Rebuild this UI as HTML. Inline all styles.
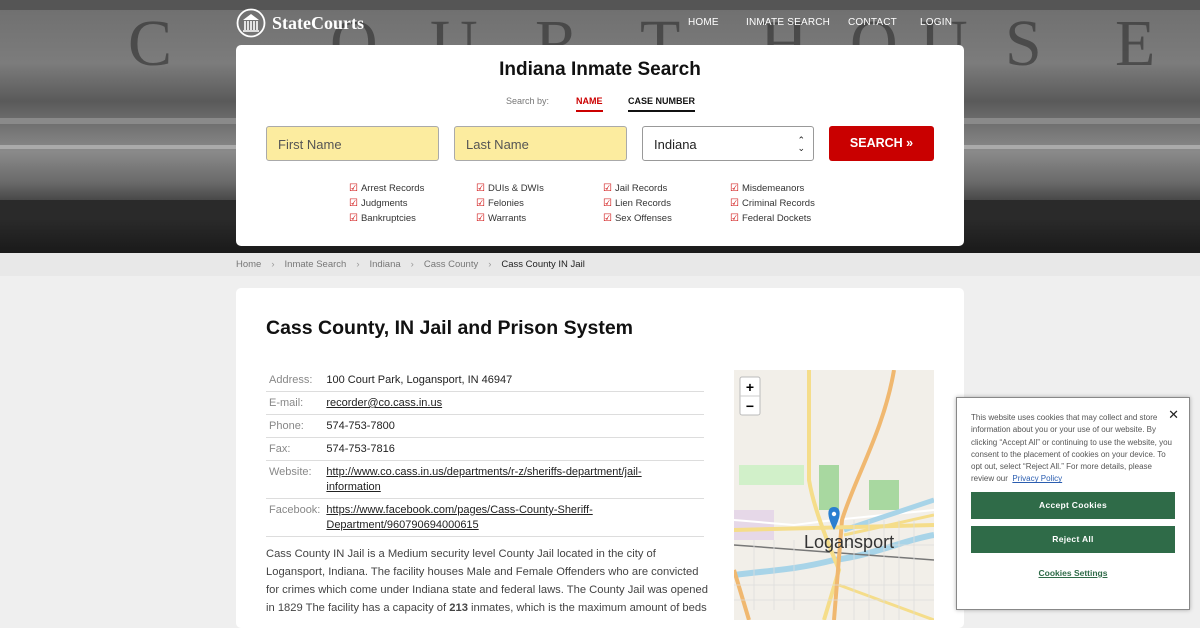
<!DOCTYPE html>
<html><head><meta charset="utf-8"><style>
*{box-sizing:border-box;margin:0;padding:0}
body{width:1200px;height:620px;overflow:hidden;background:#efefef;font-family:"Liberation Sans","DejaVu Sans",sans-serif;position:relative}
.hero{position:absolute;left:0;top:0;width:1200px;height:253px;background:linear-gradient(180deg,#6e6e6e 0,#7c7c7c 25%,#5a5a5a 40%,#8a8a8a 60%,#6a6a6a 72%,#2c2c2c 85%,#1a1a1a 100%);overflow:hidden}
.hero .L{position:absolute;top:6px;font-family:"Liberation Serif",serif;font-size:66px;color:#2e2e2e;opacity:.6}
.hero .band{position:absolute;left:0;width:1200px;height:6px;background:#3a3a3a}
.logo{position:absolute;left:236px;top:8px;color:#fff;font-family:"Liberation Serif",serif;font-size:18px;font-weight:bold;display:flex;align-items:center;gap:6px}
.nav{position:absolute;top:17px;font-size:10px;color:#fff;letter-spacing:.2px}
.box{position:absolute;left:236px;top:45px;width:728px;height:201px;background:#fff;border-radius:5px}
.box h1{position:absolute;top:14px;width:100%;text-align:center;font-size:19px;font-weight:bold;color:#111}
.sb{position:absolute;top:51px;font-size:9px;color:#777}
.tab{position:absolute;top:51px;font-size:9px;font-weight:bold;padding-bottom:4px}
.inp{position:absolute;top:81px;height:35px;border:1px solid #aaa;border-radius:3px;background:#fcec9f;font-size:13px;color:#555;padding:10px 11px}
.btn{position:absolute;left:593px;top:81px;width:105px;height:35px;background:#c90000;border-radius:3px;color:#fff;font-weight:bold;font-size:12.5px;text-align:center;line-height:35px}
.chk{position:absolute;top:136px;font-size:9.5px;color:#333;line-height:15px}
.chk span{color:#c00;font-size:10px;margin-right:3px}
.crumb{position:absolute;left:0;top:253px;width:1200px;height:23px;background:#e8e8e8;font-size:9.5px;color:#777;padding:6px 0 0 236px}
.crumb b{font-weight:normal;color:#999;margin:0 10px}
.card{position:absolute;left:236px;top:288px;width:728px;height:340px;background:#fff;border-radius:5px}
.card h2{position:absolute;left:30px;top:29px;font-size:19.5px;color:#111}
table{position:absolute;left:30px;top:81px;width:438px;border-collapse:collapse;font-size:11px;color:#222}
td{border-bottom:1px solid #ddd;padding:4px 3px 3px;vertical-align:top;line-height:15px}
td:first-child{color:#888;width:56px}
p.d{position:absolute;left:30px;top:257px;width:442px;font-size:11.2px;line-height:18px;color:#444}
.map{position:absolute;left:734px;top:370px;width:200px;height:250px;background:#f2efe9;overflow:hidden}
.cookie{position:absolute;left:956px;top:397px;width:234px;height:213px;background:#fff;border:1px solid #888;box-shadow:0 0 4px rgba(0,0,0,.3)}
.cookie p{position:absolute;left:14px;top:14px;width:204px;font-size:8px;line-height:12.3px;color:#555}
.cb{position:absolute;left:14px;width:204px;height:27px;background:#2f6b48;color:#fff;font-size:8.5px;font-weight:bold;text-align:center;line-height:27px;letter-spacing:.3px}
</style></head><body>
<div class="hero">
<div class="band" style="top:0;height:10px;background:#555"></div>
<div class="band" style="top:118px;background:#8a8a8a"></div>
<div class="band" style="top:145px;background:#aaa;height:4px"></div>
<div class="band" style="top:200px;background:#2a2a2a;height:20px"></div>
<div class="L" style="left:128px">C</div>
<div class="L" style="left:330px">O</div>
<div class="L" style="left:430px">U</div>
<div class="L" style="left:535px">R</div>
<div class="L" style="left:640px">T</div>
<div class="L" style="left:760px">H</div>
<div class="L" style="left:850px">O</div>
<div class="L" style="left:920px">U</div>
<div class="L" style="left:1005px">S</div>
<div class="L" style="left:1115px">E</div>
</div>
<div class="logo"><svg width="30" height="30" viewBox="0 0 30 30"><circle cx="15" cy="15" r="13.5" fill="none" stroke="#fff" stroke-width="1.8"/><path d="M7 12 L15 6 L23 12Z" fill="#fff"/><path d="M9 13v9M12 13v9M15 13v9M18 13v9M21 13v9" stroke="#fff" stroke-width="1.6"/><path d="M7 23h16" stroke="#fff" stroke-width="1.5"/></svg>StateCourts</div>
<div class="nav" style="left:688px">HOME</div>
<div class="nav" style="left:746px">INMATE SEARCH</div>
<div class="nav" style="left:848px">CONTACT</div>
<div class="nav" style="left:920px">LOGIN</div>
<div class="box">
<h1>Indiana Inmate Search</h1>
<div class="sb" style="left:270px">Search by:</div>
<div class="tab" style="left:340px;color:#c00;border-bottom:2px solid #c00">NAME</div>
<div class="tab" style="left:392px;color:#111;border-bottom:2px solid #111">CASE NUMBER</div>
<div class="inp" style="left:30px;width:173px">First Name</div>
<div class="inp" style="left:218px;width:173px">Last Name</div>
<div class="inp" style="left:406px;width:172px;background:#fff;color:#222;border-color:#999">Indiana<span style="position:absolute;right:8px;top:9px;font-size:9px;line-height:8px">⌃<br>⌄</span></div>
<div class="btn">SEARCH »</div>
<div class="chk" style="left:113px"><span>☑</span>Arrest Records<br><span>☑</span>Judgments<br><span>☑</span>Bankruptcies</div>
<div class="chk" style="left:240px"><span>☑</span>DUIs &amp; DWIs<br><span>☑</span>Felonies<br><span>☑</span>Warrants</div>
<div class="chk" style="left:367px"><span>☑</span>Jail Records<br><span>☑</span>Lien Records<br><span>☑</span>Sex Offenses</div>
<div class="chk" style="left:494px"><span>☑</span>Misdemeanors<br><span>☑</span>Criminal Records<br><span>☑</span>Federal Dockets</div>
</div>
<div class="crumb">Home<b>›</b>Inmate Search<b>›</b>Indiana<b>›</b>Cass County<b>›</b><span style="color:#222">Cass County IN Jail</span></div>
<div class="card">
<h2>Cass County, IN Jail and Prison System</h2>
<table>
<tr><td>Address:</td><td>100 Court Park, Logansport, IN 46947</td></tr>
<tr><td>E-mail:</td><td><u>recorder@co.cass.in.us</u></td></tr>
<tr><td>Phone:</td><td>574-753-7800</td></tr>
<tr><td>Fax:</td><td>574-753-7816</td></tr>
<tr><td>Website:</td><td><u>http://www.co.cass.in.us/departments/r-z/sheriffs-department/jail-<br>information</u></td></tr>
<tr><td>Facebook:</td><td><u>https://www.facebook.com/pages/Cass-County-Sheriff-<br>Department/960790694000615</u></td></tr>
</table>
<p class="d">Cass County IN Jail is a Medium security level County Jail located in the city of Logansport, Indiana. The facility houses Male and Female Offenders who are convicted for crimes which come under Indiana state and federal laws. The County Jail was opened in 1829 The facility has a capacity of <b>213</b> inmates, which is the maximum amount of beds</p>
</div>
<div class="map"><svg width="200" height="250" viewBox="0 0 200 250">
<path d="M5 95 L70 95 L70 115 L5 115Z" fill="#c8f0c0" opacity=".8"/>
<path d="M85 95h20v45H85Z" fill="#a8d8a0"/>
<path d="M135 110h30v30h-30Z" fill="#a8d8a0"/>
<path d="M0 140h40v30H0Z" fill="#e6d8e8"/>
<path d="M0 150 L60 155 L100 150 L200 140" stroke="#fff" stroke-width="2" fill="none"/>
<path d="M0 205 C40 200 60 200 100 190 C140 185 170 170 200 165" stroke="#a8d4e8" stroke-width="6" fill="none"/>
<path d="M110 160 C140 150 170 140 200 130" stroke="#a8d4e8" stroke-width="5" fill="none"/>
<path d="M0 175 L200 190" stroke="#777" stroke-width="1.5" fill="none"/>
<path d="M75 0 L75 110 C80 140 95 175 105 200 L90 250" stroke="#f5dd8a" stroke-width="4" fill="none"/>
<path d="M160 0 C150 60 120 110 108 150 L100 250" stroke="#f0b870" stroke-width="4" fill="none"/>
<path d="M0 160 L200 155" stroke="#f5dd8a" stroke-width="4" fill="none"/>
<path d="M110 165 L200 145" stroke="#f5dd8a" stroke-width="3" fill="none"/>
<path d="M0 200 L15 250" stroke="#f0b870" stroke-width="4" fill="none"/>
<path d="M105 215 L200 250" stroke="#f5dd8a" stroke-width="3" fill="none"/>
<g stroke="#ddd" stroke-width=".8"><path d="M120 150v100M135 150v100M150 150v100M165 150v100M180 150v100M20 170v70M40 170v70M60 170v70"/><path d="M0 215h200M0 230h200M110 175h90"/></g>
<text x="70" y="178" font-size="18" fill="#333" font-family="Liberation Sans,sans-serif">Logansport</text>
<path d="M100 137 C93 137 92 145 100 160 C108 145 107 137 100 137Z" fill="#2a7fd0"/><circle cx="100" cy="144" r="2.2" fill="#fff"/>
<rect x="6" y="7" width="20" height="38" rx="2" fill="#fff" stroke="#bbb"/><path d="M6 26h20" stroke="#ccc"/>
<text x="16" y="22" font-size="14" font-weight="bold" text-anchor="middle" fill="#000">+</text><text x="16" y="41" font-size="14" font-weight="bold" text-anchor="middle" fill="#000">−</text>
</svg></div>
<div class="cookie">
<p>This website uses cookies that may collect and store information about you or your use of our website. By clicking “Accept All” or continuing to use the website, you consent to the placement of cookies on your device. To opt out, select “Reject All.” For more details, please review our &nbsp;<u style="color:#2a5db0">Privacy Policy</u></p>
<div style="position:absolute;right:10px;top:9px;font-size:13px;font-weight:bold;color:#222">✕</div>
<div class="cb" style="top:94px">Accept Cookies</div>
<div class="cb" style="top:128px">Reject All</div>
<div style="position:absolute;left:0;width:100%;top:170px;text-align:center;font-size:8.5px;font-weight:bold;color:#2f6b48;text-decoration:underline">Cookies Settings</div>
</div>
</body></html>
